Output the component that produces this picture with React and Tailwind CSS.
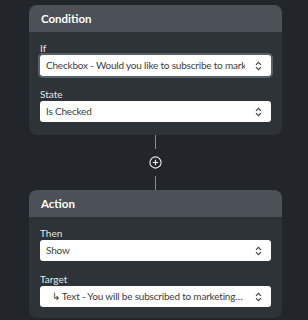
import React from "react";

function Chevrons() {
  return (
    <svg width="7" height="10" viewBox="0 0 7 10" className="shrink-0">
      <path d="M1 3.8 L3.5 1.3 L6 3.8" fill="none" stroke="#444" strokeWidth="1.2" />
      <path d="M1 6.2 L3.5 8.7 L6 6.2" fill="none" stroke="#444" strokeWidth="1.2" />
    </svg>
  );
}

function Select({ children, focused }) {
  return (
    <div
      className={
        "flex h-[21px] items-center rounded-[3px] bg-white pl-[6px] pr-[9px] " +
        (focused ? "shadow-[0_0_0_2px_#56606a]" : "")
      }
    >
      <div className="mr-[10px] min-w-0 flex-1 overflow-hidden whitespace-nowrap text-[10px] tracking-[-0.2px] text-[#3b3d40]">
        {children}
      </div>
      <Chevrons />
    </div>
  );
}

function Label({ children }) {
  return <div className="mb-px text-[10px] leading-[12px] text-[#e4e6e8]">{children}</div>;
}

function Panel({ title, children, pb }) {
  return (
    <div className="overflow-hidden rounded-lg bg-[#2e3338]">
      <div className="flex h-[27px] items-center bg-[#4b5157] px-3 text-[11.5px] font-bold text-white">
        {title}
      </div>
      <div className={"px-[11px] pt-[10px] " + pb}>{children}</div>
    </div>
  );
}

export default function App() {
  return (
    <div
      className="h-[320px] w-[308px] overflow-hidden bg-[#222529] pl-[29px] pr-[26px] pt-[5px]"
      style={{ fontFamily: "Lato, 'Noto Sans', sans-serif" }}
    >
      <Panel title="Condition" pb="pb-[13px]">
        <Label>If</Label>
        <Select focused>Checkbox - Would you like to subscribe to marketing emails?</Select>
        <div className="h-[12px]" />
        <Label>State</Label>
        <Select>Is Checked</Select>
      </Panel>
      <div className="flex flex-col items-center">
        <div className="h-[14px] w-px bg-[#8a9096]" />
        <svg width="13" height="13" viewBox="0 0 13 13" className="my-[7px]">
          <circle cx="6.5" cy="6.5" r="5.6" fill="none" stroke="#eceef0" strokeWidth="1.1" />
          <path d="M6.5 3.8 V9.2 M3.8 6.5 H9.2" stroke="#eceef0" strokeWidth="1.2" />
        </svg>
        <div className="h-[14px] w-px bg-[#8a9096]" />
      </div>
      <Panel title="Action" pb="pb-[11px]">
        <Label>Then</Label>
        <Select>Show</Select>
        <div className="h-[12px]" />
        <Label>Target</Label>
        <Select>
          <span className="block truncate pl-[6px]">↳ Text - You will be subscribed to marketing emails</span>
        </Select>
      </Panel>
    </div>
  );
}
